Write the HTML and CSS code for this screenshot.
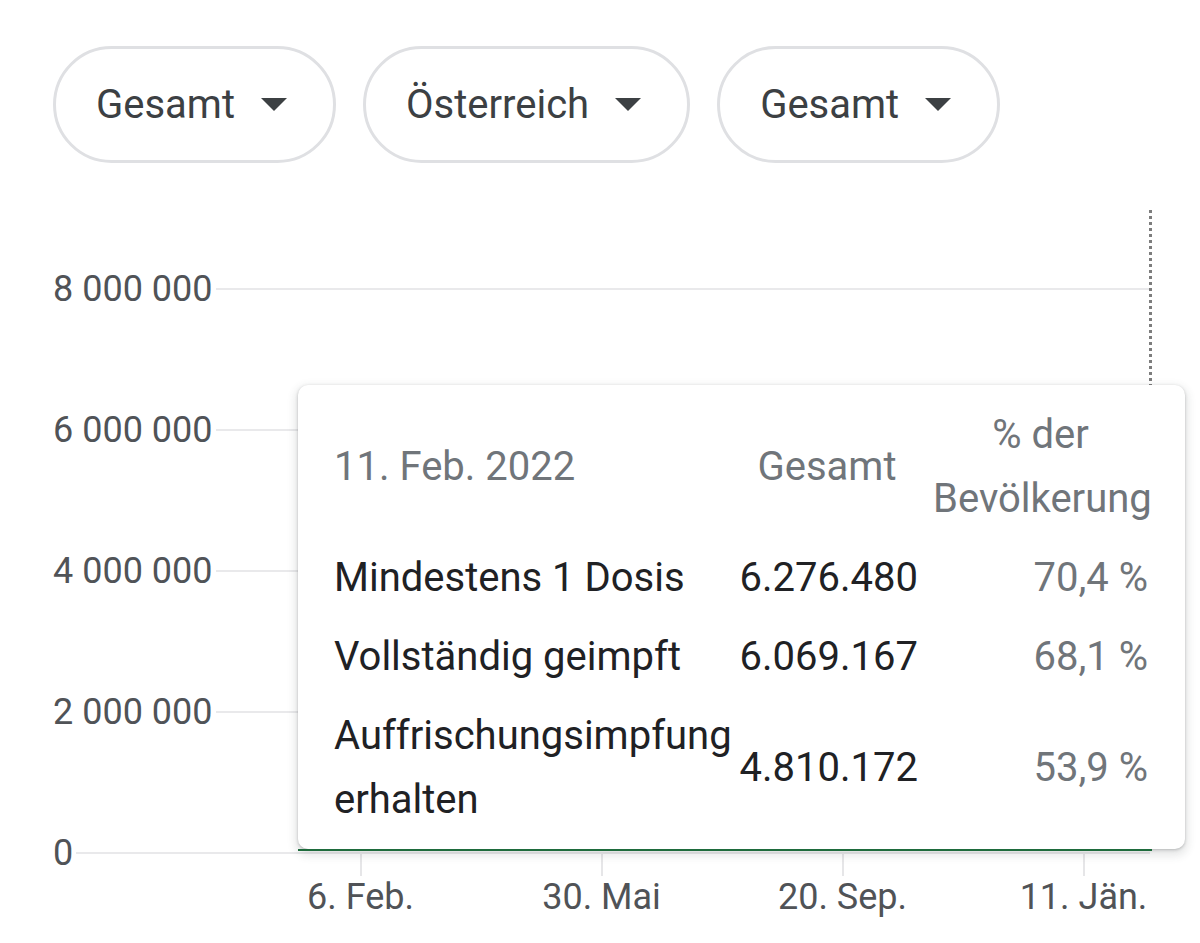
FILE: index.html
```html
<!DOCTYPE html>
<html lang="de">
<head>
<meta charset="utf-8">
<title>Impfungen</title>
<link rel="stylesheet" href="styles.css">
</head>
<body>
<div class="filters">
  <button class="pill"><span>Gesamt</span><i class="caret"></i></button>
  <button class="pill"><span>Österreich</span><i class="caret"></i></button>
  <button class="pill"><span>Gesamt</span><i class="caret"></i></button>
</div>
<div class="chart">
  <div class="grid">
    <div class="gridrow"><span class="ylabel">8 000 000</span><span class="line"></span></div>
    <div class="gridrow"><span class="ylabel">6 000 000</span><span class="line"></span></div>
    <div class="gridrow"><span class="ylabel">4 000 000</span><span class="line"></span></div>
    <div class="gridrow"><span class="ylabel">2 000 000</span><span class="line"></span></div>
    <div class="gridrow"><span class="ylabel">0</span><span class="line"></span></div>
  </div>
  <div class="xaxis">
    <div class="xtick"><span class="tick"></span><span class="xlabel">6. Feb.</span></div>
    <div class="xtick"><span class="tick"></span><span class="xlabel">30. Mai</span></div>
    <div class="xtick"><span class="tick"></span><span class="xlabel">20. Sep.</span></div>
    <div class="xtick"><span class="tick"></span><span class="xlabel">11. Jän.</span></div>
  </div>
  <div class="cursor"></div>
  <div class="tooltip">
    <div class="tt-grid">
      <div class="tt-date">11. Feb. 2022</div>
      <div class="tt-head tt-c2">Gesamt</div>
      <div class="tt-head tt-c3">% der Bevölkerung</div>

      <div class="tt-label">Mindestens 1 Dosis</div>
      <div class="tt-val">6.276.480</div>
      <div class="tt-pct">70,4 %</div>

      <div class="tt-label">Vollständig geimpft</div>
      <div class="tt-val">6.069.167</div>
      <div class="tt-pct">68,1 %</div>

      <div class="tt-label">Auffrischungsimpfung erhalten</div>
      <div class="tt-val">4.810.172</div>
      <div class="tt-pct">53,9 %</div>
    </div>
  </div>
  <div class="series"></div>
</div>
</body>
</html>
```
FILE: styles.css
```css
* { box-sizing: border-box; }
html, body {
  margin: 0;
  padding: 0;
  background: #fff;
  font-family: Roboto, "Noto Sans", Arial, sans-serif;
}
body { width: 1200px; height: 943px; overflow: hidden; }

.filters {
  display: flex;
  gap: 27px;
  padding: 46px 0 0 53px;
}
.pill {
  display: flex;
  align-items: center;
  gap: 26px;
  height: 117px;
  padding: 0 46px 0 40px;
  border: 3px solid #dfe0e3;
  border-radius: 60px;
  background: #fff;
  font-family: Roboto, sans-serif;
  font-size: 40px;
  color: #3c4043;
}
.caret {
  display: block;
  width: 0;
  height: 0;
  border-left: 13px solid transparent;
  border-right: 13px solid transparent;
  border-top: 13px solid #3c4043;
}

.chart {
  position: relative;
  height: 780px;
}
.grid {
  display: flex;
  flex-direction: column;
  gap: 139px;
  padding: 125px 50px 0 53px;
}
.gridrow {
  display: flex;
  align-items: center;
  gap: 3px;
  height: 2px;
}
.ylabel {
  font-size: 36px;
  line-height: 1;
  color: #505357;
  white-space: nowrap;
}
.line {
  flex: 1;
  height: 2px;
  background: #e9e9eb;
}
.xaxis {
  display: grid;
  grid-template-columns: repeat(4, 241px);
  padding-left: 240px;
}
.xtick {
  display: flex;
  flex-direction: column;
  align-items: center;
}
.tick {
  width: 2px;
  height: 22px;
  background: #e6e6e8;
}
.xlabel {
  margin-top: 0;
  font-size: 36px;
  line-height: 42px;
  color: #505357;
  white-space: nowrap;
}

.cursor {
  position: absolute;
  left: 1149px;
  top: 47px;
  width: 3px;
  height: 641px;
  background: repeating-linear-gradient(to bottom, #7d7d7d 0 3px, transparent 3px 6px);
}
.tooltip {
  position: absolute;
  left: 298px;
  top: 222px;
  width: 887px;
  padding: 10px 37px 10px 36px;
  background: #fff;
  border-radius: 10px;
  box-shadow: 0 1px 3px rgba(60,64,67,0.3), 0 4px 8px 3px rgba(60,64,67,0.12);
}
.tt-grid {
  display: grid;
  grid-template-columns: 402px 182px 230px;
  align-items: center;
  font-size: 40px;
  line-height: 64px;
}
.tt-grid > div { padding: 7.5px 0; }
.tt-date { color: #70757a; }
.tt-head { color: #70757a; text-align: center; }
.tt-c3 { padding-left: 15px !important; }
.tt-label { color: #202124; }
.tt-val { color: #202124; text-align: right; }
.tt-pct { color: #70757a; text-align: right; }

.series {
  position: absolute;
  left: 298px;
  top: 686px;
  width: 854px;
  height: 2px;
  background: #1e6b3c;
}
```
